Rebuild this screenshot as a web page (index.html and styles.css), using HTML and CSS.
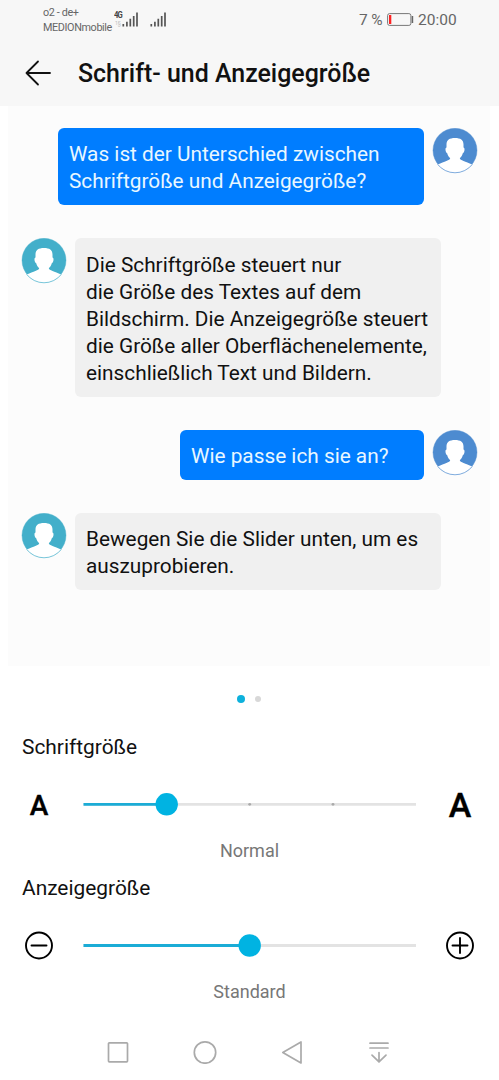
FILE: index.html
```html
<!DOCTYPE html>
<html lang="de">
<head>
<meta charset="utf-8">
<title>Schrift- und Anzeigegröße</title>
<link rel="stylesheet" href="styles.css">
</head>
<body>
<svg class="defs" width="0" height="0" aria-hidden="true">
  <symbol id="person" viewBox="0 0 46 46">
    <circle cx="23" cy="22.300" r="22" fill="currentColor" stroke="currentColor" stroke-width=".4"/>
    <path fill="#fff" d="M23 10C28.500 10 31.500 12 31.500 16.500V19.500C33.300 19.700 32.500 24.500 30.800 25.200C30.300 27.500 29 29 27.800 30.300C28 32.500 33.500 33.300 40.200 36.600A22 22 0 0 1 5.800 36.600C12.500 33.300 18 32.500 18.200 30.300C17 29 15.700 27.500 15.200 25.200C13.500 24.500 12.700 19.700 14.500 19.500V16.500C14.500 12 17.500 10 23 10Z"/>
    <path d="M5.600 36.300A22.100 22.100 0 0 0 40.400 36.300" fill="none" stroke="currentColor" stroke-width=".7"/>
  </symbol>
  <symbol id="signal" viewBox="0 0 16 15">
    <path stroke="#555" stroke-width="1.700" d="M1.300 12v2.500M4.900 9.700v4.800M8.300 6.800v7.700M11.700 3.900v10.600M15 .5v14"/>
  </symbol>
</svg>

<header class="top">
  <div class="status">
    <div class="carrier">o2 - de+<br>MEDIONmobile</div>
    <div class="network"><b>4G</b><small>1§</small></div>
    <svg class="signal" width="16" height="15"><use href="#signal"/></svg>
    <svg class="signal second" width="16" height="15"><use href="#signal"/></svg>
    <div class="percent">7 %</div>
    <svg class="battery" width="27" height="13" viewBox="0 0 27 13">
      <rect x=".6" y=".6" width="23.300" height="11.800" rx="2" fill="none" stroke="#777"/>
      <path d="M2 2h2.300v9H2z" fill="#f22"/>
      <path d="M24.700 3h1.500v7h-1.500z" fill="#666"/>
    </svg>
    <div class="clock">20:00</div>
  </div>
  <div class="titlebar">
    <svg class="back" width="26" height="26" viewBox="0 0 26 26" fill="none" stroke="#111" stroke-width="1.800" stroke-linecap="round" stroke-linejoin="round"><path d="M25 13H1.500M13 1.500 1.500 13 13 24.500"/></svg>
    <h1>Schrift- und Anzeigegröße</h1>
  </div>
</header>

<main class="chat">
  <div class="row sent">
    <p class="bubble wide">Was ist der Unterschied zwischen<br>Schriftgröße und Anzeigegröße?</p>
    <svg class="avatar" width="46" height="46"><use href="#person"/></svg>
  </div>
  <div class="row received">
    <svg class="avatar" width="46" height="46"><use href="#person"/></svg>
    <p class="bubble wide">Die Schriftgröße steuert nur<br>die Größe des Textes auf dem<br>Bildschirm. Die Anzeigegröße steuert<br>die Größe aller Oberflächenelemente,<br>einschließlich Text und Bildern.</p>
  </div>
  <div class="row sent">
    <p class="bubble short">Wie passe ich sie an?</p>
    <svg class="avatar" width="46" height="46"><use href="#person"/></svg>
  </div>
  <div class="row received">
    <svg class="avatar" width="46" height="46"><use href="#person"/></svg>
    <p class="bubble wide">Bewegen Sie die Slider unten, um es<br>auszuprobieren.</p>
  </div>
</main>

<div class="pager"><i class="on"></i><i></i></div>

<section class="setting">
  <h2>Schriftgröße</h2>
  <div class="control">
    <span class="letter small">A</span>
    <svg class="slider" width="334" height="24" viewBox="0 0 334 24">
      <path class="track" d="M.5 12.300h332.500"/>
      <path class="fill" d="M.5 12.300h83"/>
      <g fill="#aaa"><circle cx="166.700" cy="12.300" r="1.400"/><circle cx="250" cy="12.300" r="1.400"/></g>
      <circle class="thumb" cx="83.700" cy="12.300" r="11.200"/>
    </svg>
    <span class="letter large">A</span>
  </div>
  <div class="value">Normal</div>
</section>

<section class="setting">
  <h2>Anzeigegröße</h2>
  <div class="control">
    <svg class="button" width="30" height="30" viewBox="0 0 30 30"><circle cx="15" cy="15.500" r="13"/><path d="M7.500 15.500h15"/></svg>
    <svg class="slider" width="334" height="24" viewBox="0 0 334 24">
      <path class="track" d="M.5 12.500h332.500"/>
      <path class="fill" d="M.5 12.500h166"/>
      <circle class="thumb" cx="166.700" cy="12.500" r="11.200"/>
    </svg>
    <svg class="button" width="30" height="30" viewBox="0 0 30 30"><circle cx="15" cy="15.500" r="13"/><path d="M7.500 15.500h15M15 8v15"/></svg>
  </div>
  <div class="value">Standard</div>
</section>

<nav class="navbar">
  <svg width="24" height="24" viewBox="0 0 24 24"><rect x="2.500" y="2.800" width="19" height="19" rx=".8"/></svg>
  <svg width="24" height="24" viewBox="0 0 24 24"><circle cx="12" cy="12.500" r="10.700"/></svg>
  <svg width="24" height="24" viewBox="0 0 24 24"><path d="M21 2v21L2.800 12.500z"/></svg>
  <svg width="24" height="24" viewBox="0 0 24 24"><path d="M3 3.200h18M3 8h18M12 12.500v9.500M5 15.200l7 6.700 7-6.700"/></svg>
</nav>
</body>
</html>
```
FILE: styles.css
```css
* { box-sizing: border-box; }
body {
  margin: 0;
  width: 499px;
  height: 1080px;
  overflow: hidden;
  background: #fff;
  color: #111;
  font-family: Roboto, "Liberation Sans", sans-serif;
}
.defs { display: block; }
svg { flex: none; display: block; }
h1, h2, p { margin: 0; font-weight: 400; }

.top { height: 106px; background: #f7f7f7; }
.status {
  height: 40px;
  display: flex;
  align-items: flex-start;
  padding-left: 43px;
  color: #666;
  white-space: nowrap;
}
.carrier { width: 71px; padding-top: 5px; font-size: 10.8px; letter-spacing: -.37px; line-height: 15px; }
.network { width: 8px; padding-top: 11px; font-size: 9px; line-height: 9px; }
.network b { display: block; color: #444; letter-spacing: -1px; transform: scaleX(.85); transform-origin: left; }
.network small { display: block; padding-left: 1px; font-size: 5px; line-height: 6px; color: #bbb; }
.signal { margin-top: 12px; }
.signal.second { margin-left: 12px; }
.percent { margin-left: 193px; width: 28px; padding-top: 10px; font-size: 15.500px; line-height: 20px; letter-spacing: -.1px; }
.battery { margin-top: 13px; }
.clock { margin-left: 4px; padding-top: 10px; font-size: 15.500px; line-height: 20px; }
.titlebar { display: flex; align-items: center; height: 66px; padding-left: 25px; }
.titlebar h1 { margin-left: 27px; padding-top: 2px; font-size: 24.950px; font-weight: 500; line-height: 30px; white-space: nowrap; }

.chat {
  height: 560px;
  margin: 0 9px 0 8px;
  padding: 22px 12px 0 13px;
  background: #fcfcfc;
}
.row { display: flex; gap: 8px; margin-bottom: 33px; align-items: flex-start; }
.sent { justify-content: flex-end; }
.bubble {
  padding: 13px 11px 10.300px;
  border-radius: 6px;
  font-size: 20.800px;
  line-height: 27px;
  white-space: nowrap;
}
.wide { width: 366px; }
.short { width: 244px; }
.sent .bubble { background: #007dff; color: #e9f7ff; }
.received .bubble { background: #f0f0f0; padding-top: 13.500px; padding-bottom: 9.800px; }
.sent .avatar { color: #4d8bd0; }
.received .avatar { color: #43afca; }

.pager { height: 66px; display: flex; justify-content: center; align-items: center; gap: 10px; padding-right: 1px; }
.pager i { width: 6px; height: 6px; border-radius: 50%; background: #d8d8d8; }
.pager .on { width: 8px; height: 8px; background: #0db1dc; }

.setting { height: 141px; }
.setting h2 { padding-left: 22px; font-size: 20.900px; line-height: 30px; }
.control { height: 84px; display: flex; align-items: center; justify-content: space-between; padding: 0 24px; }
.letter { width: 30px; padding-top: 2px; text-align: center; font-weight: 500; color: #000; -webkit-text-stroke: .4px #000; }
.small { font-size: 28px; }
.large { font-size: 34px; }
.track { stroke: #e3e3e3; stroke-width: 2.800; }
.fill { stroke: #1bacd6; stroke-width: 2.800; }
.thumb { fill: #00b3e2; }
.button { fill: none; stroke: #000; stroke-width: 1.900; stroke-linecap: round; }
.value { text-align: center; font-size: 18px; line-height: 24px; margin-top: -7px; color: #777; }

.navbar { display: flex; justify-content: space-between; padding: 26px 108px 0 106px; }
.navbar svg { fill: none; stroke: #aaa; stroke-width: 1.700; stroke-linejoin: round; stroke-linecap: round; }
```
